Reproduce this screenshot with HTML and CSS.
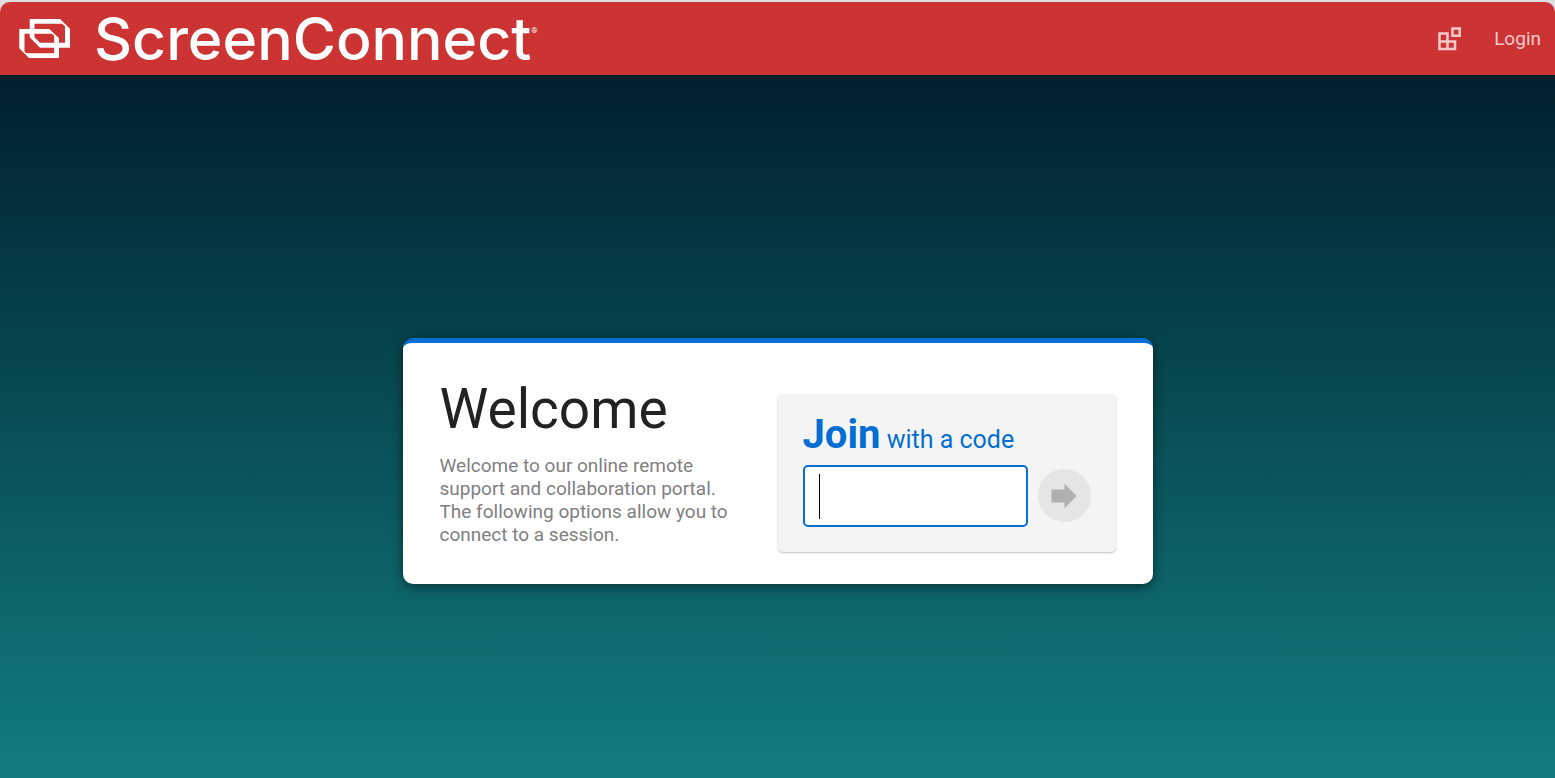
FILE: index.html
```html
<!DOCTYPE html>
<html lang="en">
<head>
  <meta charset="UTF-8" />
  <meta name="viewport" content="width=device-width, initial-scale=1" />
  <title>ScreenConnect</title>
  <link rel="stylesheet" href="styles.css">
</head>
<body>

  <header class="topbar">
    <a class="brand" href="/">
      <svg class="brand-mark" viewBox="0 0 52 41" aria-hidden="true">
        <path fill-rule="evenodd" d="M10.700 1H41L51 10.700V29.700H21L10.700 19.300ZM15.500 5.700V19.300L21 24.800H46V8.500L43.200 5.700Z" />
        <path fill-rule="evenodd" d="M0.300 11H30.300L40 20.300V40H10L0.300 30.300ZM5.500 15.800V33.500L7.300 35.300H35.200V18L33 15.800Z" />
      </svg>
      <span class="brand-name">ScreenConnect</span><span class="brand-reg">®</span>
    </a>
    <nav class="topnav">
      <a class="apps" href="#" aria-label="Extensions">
        <svg viewBox="0 0 24 24" aria-hidden="true">
          <path d="M2.500 6.500H10.500V14.500H18V22H2.500ZM2.500 14.500H10.500V22M15.500 1.500H22.700V8.700H15.500Z" />
        </svg>
      </a>
      <a class="login" href="/login">Login</a>
    </nav>
  </header>

  <main class="content">
    <section class="card">
      <div class="intro">
        <h1>Welcome</h1>
        <p>Welcome to our online remote support and collaboration portal. The following options allow you to connect to a session.</p>
      </div>
      <form class="join">
        <label for="code"><strong>Join</strong> with a code</label>
        <div class="join-row">
          <div class="code-field">
            <input type="text" id="code" autocomplete="off">
            <span class="caret"></span>
          </div>
          <button type="submit" aria-label="Join" disabled>
            <svg viewBox="0 0 26 26" aria-hidden="true">
              <path d="M0.500 6.500H13.500V0.500L25.500 13L13.500 25.500V19.500H0.500Z" />
            </svg>
          </button>
        </div>
      </form>
    </section>
  </main>

</body>
</html>
```

FILE: styles.css
```css
:root {
  --header-bg: #cc3333;
  --accent-color: #046ed2;
  --nav-color: #f5caca;
  --font-stack: Roboto, Arial, sans-serif;
}

* {
  margin: 0;
  padding: 0;
  box-sizing: border-box;
}

body {
  display: flex;
  flex-direction: column;
  min-height: 100vh;
  padding-top: 2px;
  font-family: var(--font-stack);
  background-color: #dedede;
}

a {
  text-decoration: none;
}

.topbar {
  display: flex;
  justify-content: space-between;
  align-items: center;
  height: 73px;
  padding: 0 14px 0 19px;
  background-color: var(--header-bg);
  border-radius: 10px 10px 0 0;
}

.brand {
  display: flex;
  align-items: center;
  color: #fff;
}

.brand-mark {
  width: 52px;
  height: 41px;
  margin-right: 23px;
  fill: #fff;
}

.brand-name {
  font-family: Inter, sans-serif;
  font-size: 59px;
  font-weight: 500;
  line-height: 70px;
}

.brand-reg {
  font-size: 8px;
  line-height: 24px;
  padding-bottom: 16px;
}

.topnav {
  display: flex;
  align-items: center;
  gap: 33px;
}

.apps,
.apps svg {
  display: block;
  width: 24px;
  height: 24px;
}

.apps svg {
  fill: none;
  stroke: var(--nav-color);
  stroke-width: 2.5;
}

.login {
  color: var(--nav-color);
  font-size: 19px;
}

.content {
  flex: 1;
  display: flex;
  justify-content: center;
  align-items: center;
  padding-top: 68px;
  background: linear-gradient(#00202c, #127d81);
}

.card {
  display: flex;
  justify-content: space-between;
  align-items: flex-start;
  width: 100%;
  max-width: 750px;
  padding: 36px 37px 32px;
  background-color: #fff;
  border-top: 5px solid var(--accent-color);
  border-radius: 10px;
  box-shadow: 0 3px 12px rgba(0, 0, 0, 0.5);
}

.intro {
  max-width: 300px;
}

.intro h1 {
  color: #222;
  font-size: 55px;
  font-weight: 400;
  line-height: 60px;
  margin-bottom: 15px;
}

.intro p {
  color: #808080;
  font-size: 19px;
  line-height: 23px;
}

.join {
  margin-top: 15px;
  padding: 17px 25px 25px;
  background-color: #f4f4f4;
  border-radius: 5px;
  box-shadow: 0 1px 2px rgba(0, 0, 0, 0.25);
}

.join label {
  display: block;
  color: var(--accent-color);
  font-size: 25px;
  line-height: 48px;
  margin-bottom: 1px;
}

.join strong {
  font-size: 40px;
}

.join-row {
  display: flex;
  align-items: center;
  gap: 10px;
}

.code-field {
  position: relative;
}

.code-field input {
  display: block;
  width: 225px;
  height: 62px;
  padding: 0 14px;
  font: 38px var(--font-stack);
  background-color: #fff;
  border: 2px solid var(--accent-color);
  border-radius: 5px;
  outline: none;
}

.caret {
  position: absolute;
  top: 9px;
  left: 16px;
  width: 1px;
  height: 45px;
  background-color: #000;
}

.join button {
  display: flex;
  justify-content: center;
  align-items: center;
  width: 53px;
  height: 53px;
  background-color: #e5e5e5;
  border: none;
  border-radius: 50%;
}

.join button svg {
  width: 26px;
  height: 26px;
  fill: #b0b0b0;
}
```
